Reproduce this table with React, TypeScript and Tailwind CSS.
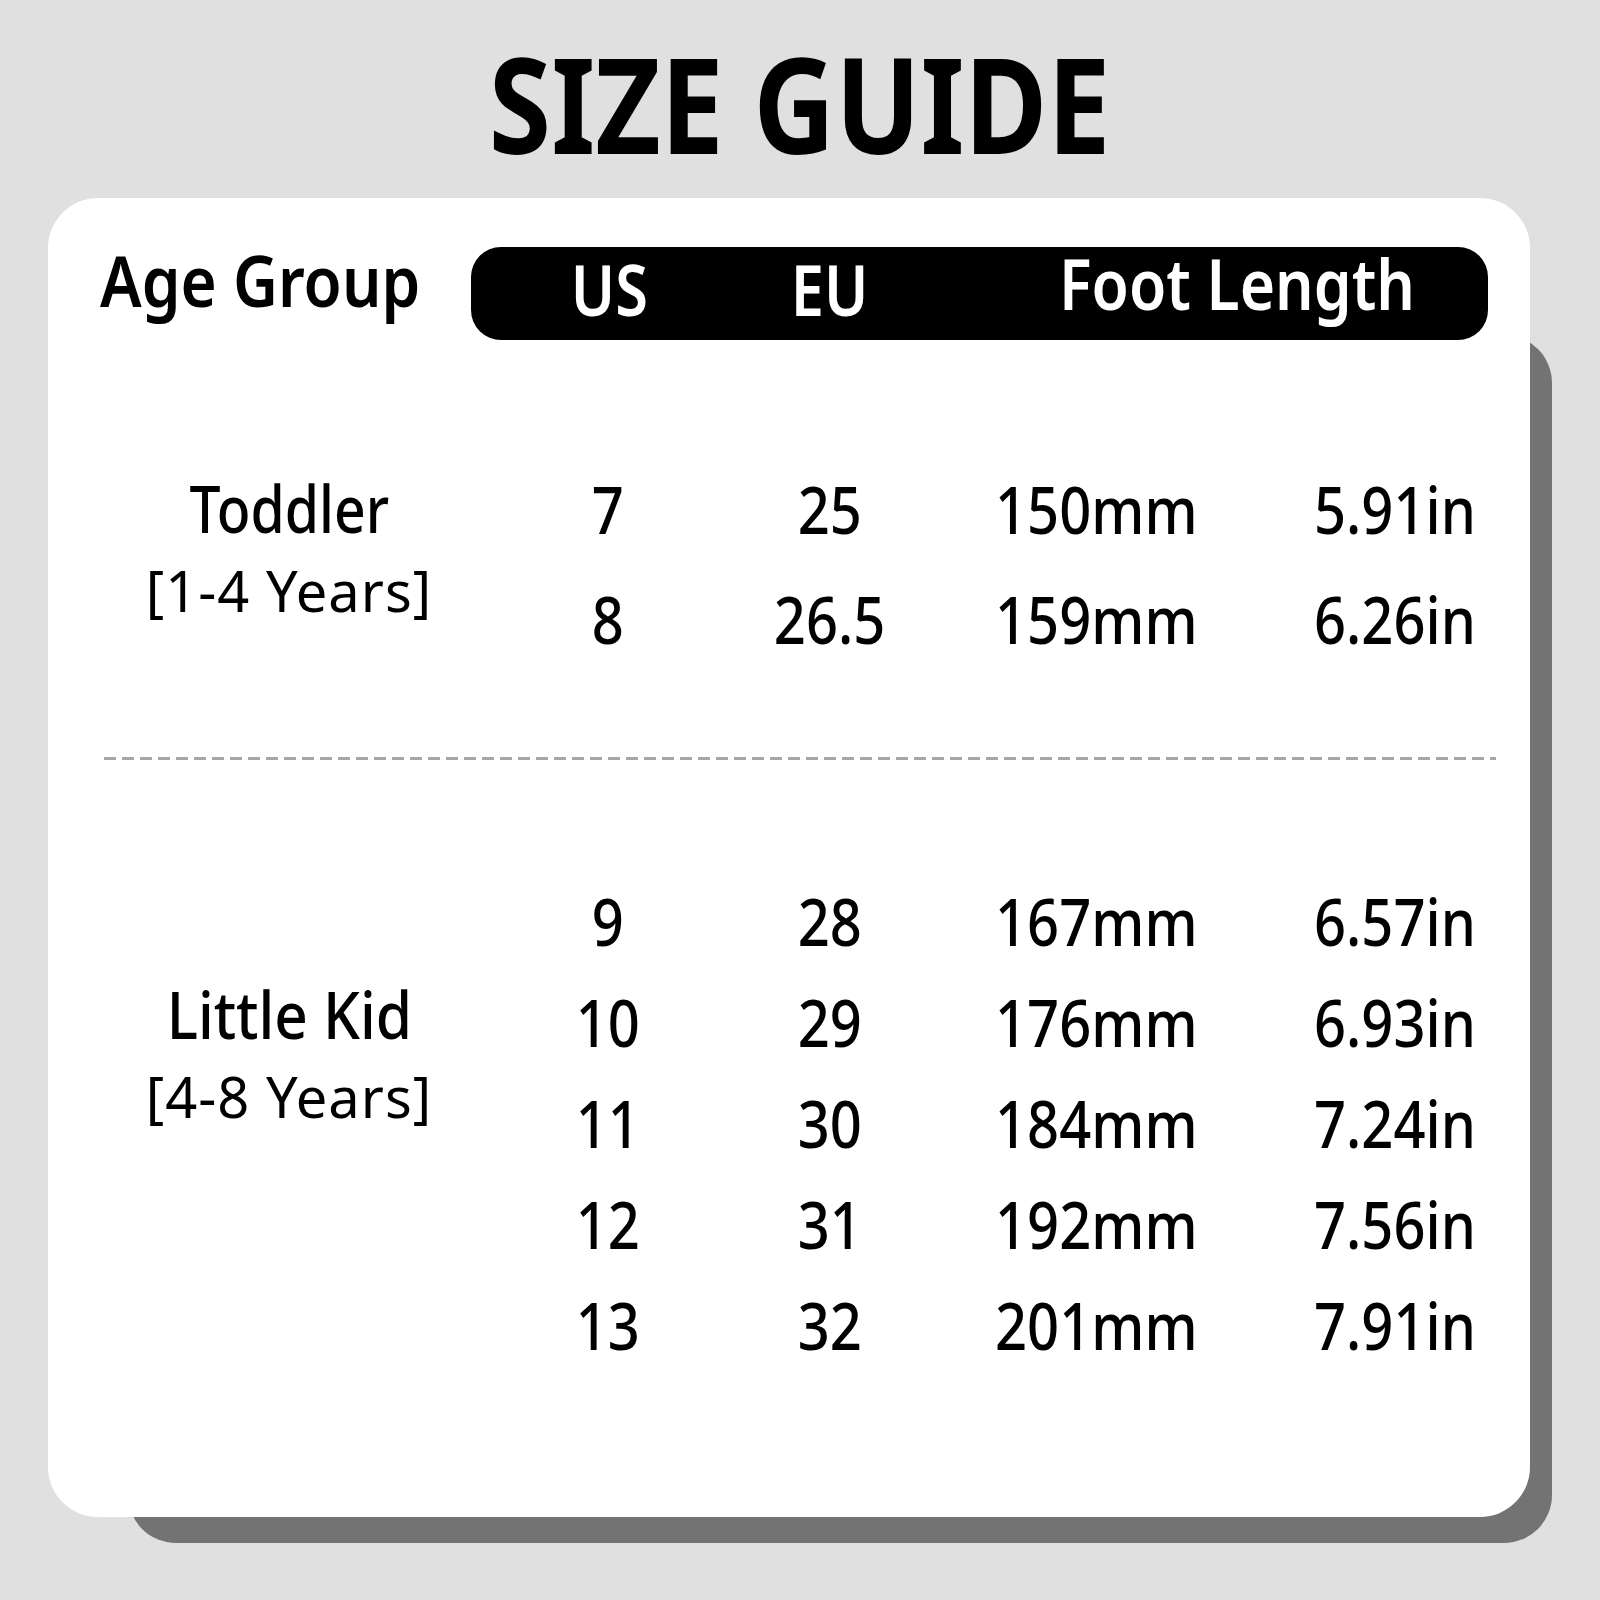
import React from "react";

type Row = { us: string; eu: string; mm: string; inch: string };

const toddlerRows: Row[] = [
  { us: "7", eu: "25", mm: "150mm", inch: "5.91in" },
  { us: "8", eu: "26.5", mm: "159mm", inch: "6.26in" },
];

const kidRows: Row[] = [
  { us: "9", eu: "28", mm: "167mm", inch: "6.57in" },
  { us: "10", eu: "29", mm: "176mm", inch: "6.93in" },
  { us: "11", eu: "30", mm: "184mm", inch: "7.24in" },
  { us: "12", eu: "31", mm: "192mm", inch: "7.56in" },
  { us: "13", eu: "32", mm: "201mm", inch: "7.91in" },
];

// the artwork's typeface is narrower than Noto Sans, so squeeze it a bit
const narrow = "inline-block scale-x-[0.85]";

function SizeRows({ rows, rowClass }: { rows: Row[]; rowClass: string }) {
  return (
    <div className="flex flex-col">
      {rows.map((r) => (
        <div key={r.us} className={`flex text-[66px] font-medium ${rowClass}`}>
          <div className="w-[156px] text-center">
            <span className={`${narrow} origin-center`}>{r.us}</span>
          </div>
          <div className="w-[288px] text-center">
            <span className={`${narrow} origin-center`}>{r.eu}</span>
          </div>
          <div className="w-[340px] pl-[21px]">
            <span className={`${narrow} origin-left`}>{r.mm}</span>
          </div>
          <div className="flex-1">
            <span className={`${narrow} origin-left`}>{r.inch}</span>
          </div>
        </div>
      ))}
    </div>
  );
}

function AgeLabel({
  name,
  years,
  nameScale,
  className,
}: {
  name: string;
  years: string;
  nameScale: string;
  className: string;
}) {
  return (
    <div className={`w-[482px] flex flex-col items-center ${className}`}>
      <div className="text-[65px] leading-[80px] font-medium">
        <span className={`inline-block origin-center ${nameScale}`}>{name}</span>
      </div>
      <div className="text-[56px] leading-[80px] font-normal tracking-[1px] mt-[2px]">{years}</div>
    </div>
  );
}

export default function App() {
  return (
    <div className="w-[1600px] h-[1600px] bg-[#e0e0e0] font-['Noto_Sans',sans-serif] text-black pt-[36px]">
      <h1 className="text-center text-[133px] leading-[133px] font-bold">
        <span className="inline-block scale-x-[0.85] origin-center">SIZE GUIDE</span>
      </h1>

      <div className="relative mt-[29px] ml-[48px] w-[1482px] h-[1319px]">
        {/* drop shadow block */}
        <div className="absolute left-[80px] top-[137px] right-[-22px] bottom-[-26px] bg-[#737373] rounded-[48px]" />

        <div className="relative h-full bg-white rounded-[50px] pt-[49px]">
          {/* header */}
          <div className="flex items-start h-[93px] pl-[52px] pr-[42px]">
            <div className="text-[70px] leading-[93px] font-semibold -mt-[13px]">
              <span className="inline-block scale-x-[0.886] origin-left">Age Group</span>
            </div>
            <div className="ml-auto w-[1017px] h-[93px] bg-black rounded-[30px] flex items-start text-white text-[70px] leading-[93px] font-semibold">
              <div className="w-[276px] text-center -mt-[4px]">
                <span className="inline-block scale-x-[0.85] origin-center">US</span>
              </div>
              <div className="w-[166px] text-center -mt-[4px]">
                <span className="inline-block scale-x-[0.85] origin-center">EU</span>
              </div>
              <div className="pl-[146px] -mt-[10px]">
                <span className="inline-block scale-x-[0.865] origin-left">Foot Length</span>
              </div>
            </div>
          </div>

          {/* toddler */}
          <div className="flex mt-[113px]">
            <AgeLabel name="Toddler" years="[1-4 Years]" nameScale="scale-x-[0.85]" className="pt-[15px]" />
            <SizeRows rows={toddlerRows} rowClass="leading-[110px]" />
          </div>

          <div className="ml-[56px] mt-[84px] w-[1392px] h-[3px] bg-[repeating-linear-gradient(to_right,#a6a6a6_0_12px,transparent_12px_18px)]" />

          {/* little kid */}
          <div className="flex mt-[110px]">
            <AgeLabel name="Little Kid" years="[4-8 Years]" nameScale="scale-x-[0.9]" className="pt-[104px]" />
            <SizeRows rows={kidRows} rowClass="leading-[101px]" />
          </div>
        </div>
      </div>
    </div>
  );
}
